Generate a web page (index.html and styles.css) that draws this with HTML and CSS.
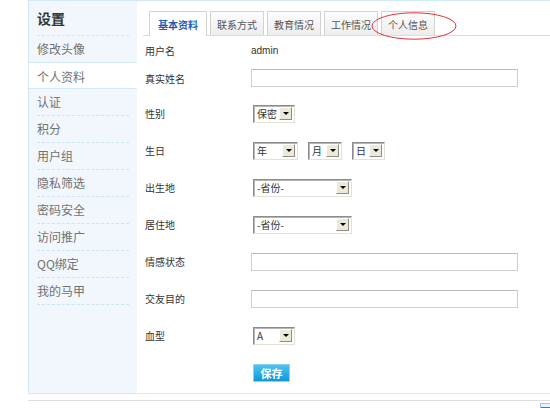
FILE: index.html
```html
<!DOCTYPE html>
<html lang="zh-CN">
<head>
<meta charset="utf-8">
<title>设置 - 个人资料</title>
<link rel="stylesheet" href="styles.css">
</head>
<body>
<div class="page">
  <div class="panel">
    <aside class="side">
      <h2 class="side-title">设置</h2>
      <ul class="side-nav">
        <li>修改头像</li>
        <li class="active">个人资料</li>
        <li>认证</li>
        <li>积分</li>
        <li>用户组</li>
        <li>隐私筛选</li>
        <li>密码安全</li>
        <li>访问推广</li>
        <li>QQ绑定</li>
        <li>我的马甲</li>
      </ul>
    </aside>
    <main class="main">
      <div class="tabs-wrap">
        <ul class="tabs">
          <li class="tab active">基本资料</li>
          <li class="tab">联系方式</li>
          <li class="tab">教育情况</li>
          <li class="tab">工作情况</li>
          <li class="tab">个人信息</li>
        </ul>
        <svg class="mark" width="88" height="30" viewBox="0 0 88 30"><ellipse cx="44" cy="15" rx="42" ry="13.2" fill="none" stroke="#e5323a" stroke-width="1"/></svg>
      </div>
      <div class="form">
        <div class="row row-short"><span class="label">用户名</span><span class="value">admin</span></div>
        <div class="row row-short"><span class="label">真实姓名</span><span class="input"></span></div>
        <div class="row row-gap"><span class="label">性别</span><span class="sel sel-sm"><span class="sel-text">保密</span><span class="sel-btn"></span></span></div>
        <div class="row"><span class="label">生日</span>
          <span class="sel sel-year"><span class="sel-text">年</span><span class="sel-btn"></span></span>
          <span class="sel sel-md"><span class="sel-text">月</span><span class="sel-btn"></span></span>
          <span class="sel sel-day"><span class="sel-text">日</span><span class="sel-btn"></span></span>
        </div>
        <div class="row"><span class="label">出生地</span><span class="sel sel-lg"><span class="sel-text">-省份-</span><span class="sel-btn"></span></span></div>
        <div class="row"><span class="label">居住地</span><span class="sel sel-lg"><span class="sel-text">-省份-</span><span class="sel-btn"></span></span></div>
        <div class="row"><span class="label">情感状态</span><span class="input"></span></div>
        <div class="row"><span class="label">交友目的</span><span class="input"></span></div>
        <div class="row"><span class="label">血型</span><span class="sel sel-sm"><span class="sel-text">A</span><span class="sel-btn"></span></span></div>
        <div class="row"><span class="label"></span><button class="save">保存</button></div>
      </div>
    </main>
  </div>
  <div class="footer"><span class="corner-icon"></span></div>
</div>
</body>
</html>
```

FILE: styles.css
```css
html, body {
  margin: 0;
  padding: 0;
  overflow: hidden;
  background: #fff;
  font-family: "Noto Sans CJK SC", "Liberation Sans", sans-serif;
  color: #333;
}
ul { list-style: none; margin: 0; padding: 0; }

.page {
  margin-left: 28px;
}
.panel {
  display: flex;
  border-top: 1px solid #d3e8f5;
  border-left: 1px solid #d3e8f5;
  border-bottom: 1px solid #d3e8f5;
}

/* sidebar */
.side {
  width: 108px;
  flex: none;
  background: #f1f7fc;
}
.side-title {
  margin: 0 8px;
  height: 34px;
  line-height: 34px;
  font-size: 14px;
  font-weight: bold;
  color: #333;
  border-bottom: 1px dashed #d3e6f3;
}
.side-nav li {
  margin: 0 8px;
  height: 26px;
  line-height: 26px;
  font-size: 12px;
  color: #727272;
  border-bottom: 1px dashed #cde3f2;
}
.side-nav li.active {
  position: relative;
  margin: -1px 0 0;
  padding-left: 8px;
  height: 25px;
  line-height: 27px;
  background: #fff;
  border-top: 1px solid #d3e8f5;
  border-bottom: 1px solid #d3e8f5;
}

/* main */
.main {
  flex: 1;
  padding-left: 6px;
}
.tabs-wrap {
  position: relative;
}
.tabs {
  display: flex;
  gap: 3px;
  padding: 10px 0 0 6px;
  border-bottom: 1px solid #dcdcdc;
}
.tab {
  height: 23px;
  line-height: 25px;
  padding: 0 6px;
  font-size: 10px;
  color: #555;
  border: 1px solid #d2d2d2;
  border-bottom: none;
  background: linear-gradient(#fdfdfd, #ededed);
}
.tab.active {
  height: 24px;
  margin-bottom: -1px;
  padding: 0 8px;
  background: #fff;
  color: #1c5fae;
  font-weight: bold;
}
.mark {
  position: absolute;
  left: 227px;
  top: 10px;
}

/* form */
.form {
  padding: 0 0 2px 2px;
}
.row {
  display: flex;
  align-items: center;
  height: 37px;
}
.row-short { height: 28px; }
.row-gap { margin-top: 3px; }
.label {
  width: 106px;
  flex: none;
  font-size: 10px;
  color: #333;
}
.value {
  font-family: "Liberation Sans", sans-serif;
  font-size: 10px;
  color: #333;
}
.input {
  box-sizing: border-box;
  width: 267px;
  height: 18px;
  border: 1px solid #cfcfcf;
  border-top-color: #bdbdbd;
  background: #fff;
}

.sel {
  box-sizing: border-box;
  display: flex;
  align-items: center;
  height: 18px;
  margin-left: 2px;
  border: 1px solid;
  border-color: #8c8c8c #e4e1d8 #e4e1d8 #8c8c8c;
  box-shadow: inset 1px 1px 0 #b4b4b4;
  background: #fff;
}
.sel + .sel { margin-left: 10px; }
.sel-text {
  flex: 1;
  padding-left: 3px;
  font-size: 10px;
  line-height: 14px;
  color: #333;
}
.sel-btn {
  box-sizing: border-box;
  position: relative;
  width: 13px;
  height: 13px;
  margin-right: 2px;
  background: #ece9d8;
  border: 1px solid;
  border-color: #fff #8f8d80 #8f8d80 #fff;
}
.sel-btn::after {
  content: "";
  position: absolute;
  left: 3px;
  top: 4px;
  border-left: 3px solid transparent;
  border-right: 3px solid transparent;
  border-top: 3px solid #000;
}
.sel-sm { width: 42px; }
.sel-year { width: 45px; }
.sel-md { width: 34px; }
.sel-day { width: 33px; }
.sel-lg { width: 99px; }

.save {
  box-sizing: border-box;
  width: 37px;
  height: 18px;
  margin-left: 2px;
  padding: 0;
  border: 1px solid #8fd3f0;
  background: linear-gradient(#4cc4f1, #0f97d8);
  color: #fff;
  font-family: "Noto Sans CJK SC", sans-serif;
  font-size: 11px;
  font-weight: bold;
  line-height: 16px;
}

/* footer */
.footer {
  display: flex;
  justify-content: flex-end;
  margin-top: 6px;
  height: 14px;
  padding-top: 2px;
  border-top: 1px solid #dedede;
}
.corner-icon {
  box-sizing: border-box;
  width: 14px;
  height: 12px;
  margin-right: -4px;
  border: 1px solid #a9c6e0;
  background: linear-gradient(#e8f2fb 30%, #2f7fd0 30%);
}
```
